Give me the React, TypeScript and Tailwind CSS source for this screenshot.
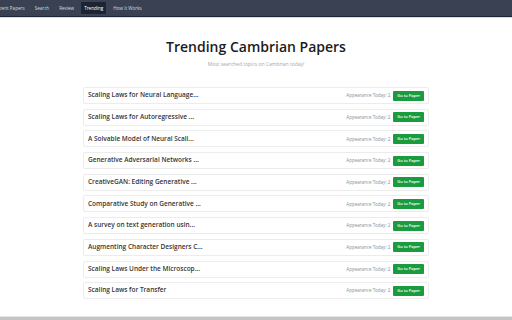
const papers = [
  'Scaling Laws for Neural Language...',
  'Scaling Laws for Autoregressive ...',
  'A Solvable Model of Neural Scali...',
  'Generative Adversarial Networks ...',
  'CreativeGAN: Editing Generative ...',
  'Comparative Study on Generative ...',
  'A survey on text generation usin...',
  'Augmenting Character Designers C...',
  'Scaling Laws Under the Microscop...',
  'Scaling Laws for Transfer',
]

const navItems = ['Recent Papers', 'Search', 'Review', 'Trending', 'How It Works']

export default function App() {
  return (
    <div
      className="h-[320px] flex flex-col bg-white overflow-hidden"
      style={{ fontFamily: '"Open Sans", "Noto Sans", sans-serif' }}
    >
      <nav className="h-[17px] shrink-0 bg-[#394152] border-b border-[#1c2636] shadow-[0_1px_0_#d5dde8] flex items-center">
        <div className="flex items-center gap-[4px] -ml-[9px]">
          {navItems.map((item) => (
            <span
              key={item}
              className={`text-[4.6px] leading-none px-[3px] py-[3.5px] rounded-[1px] ${
                item === 'Trending' ? 'bg-[#1c2433] text-white' : 'text-[#d7dbe2]'
              }`}
            >
              {item}
            </span>
          ))}
        </div>
      </nav>

      <div className="flex flex-col items-center pt-[21px]">
        <h1 className="text-[14px] leading-[17px] font-semibold text-[#1b1b1b]">
          Trending Cambrian Papers
        </h1>
        <p className="mt-[7px] text-[5px] leading-none text-[#a7a7a7]">
          Most searched topics on Cambrian today!
        </p>
      </div>

      <div className="mt-[20px] w-[346px] mx-auto flex flex-col gap-[4.7px]">
        {papers.map((title) => (
          <div
            key={title}
            className="h-[17px] flex items-center justify-between pl-[4px] pr-[4px] rounded-[2px] border border-[#ececec] bg-white"
          >
            <span className="text-[6.5px] font-semibold text-[#363636] leading-none">{title}</span>
            <div className="flex items-center gap-[3px]">
              <span className="text-[4.5px] text-[#8c8c8c] leading-none">Appearance Today: 2</span>
              <button className="h-[10px] px-[4px] bg-[#1a9c3e] text-white text-[4px] font-semibold leading-none rounded-[1px]">
                Go to Paper
              </button>
            </div>
          </div>
        ))}
      </div>

      <div className="flex-1" />
      <div className="h-[4px] shrink-0 bg-[#c4c4c4] border-t border-[#e6e6e6]" />
    </div>
  )
}
